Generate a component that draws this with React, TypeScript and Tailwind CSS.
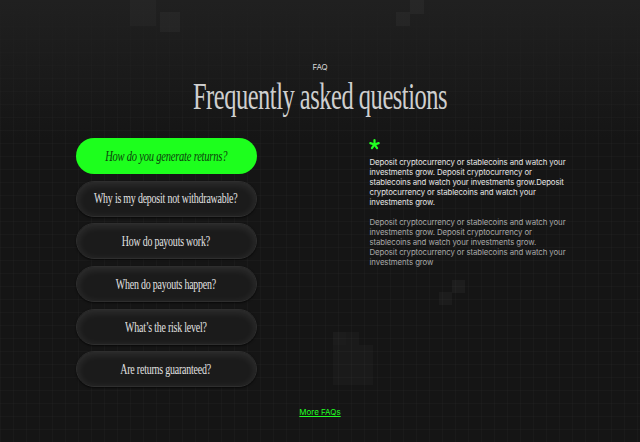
import React from "react";

const questions = [
  "How do you generate returns?",
  "Why is my deposit not withdrawable?",
  "How do payouts work?",
  "When do payouts happen?",
  "What’s the risk level?",
  "Are returns guaranteed?",
];

const squares: { x: number; y: number; s: number; o: string }[] = [
  { x: 130, y: 0, s: 26, o: "bg-white/[0.025]" },
  { x: 160, y: 12, s: 20, o: "bg-white/[0.03]" },
  { x: 410, y: 0, s: 14, o: "bg-white/[0.03]" },
  { x: 396, y: 12, s: 14, o: "bg-white/[0.03]" },
  { x: 452, y: 280, s: 13, o: "bg-white/[0.035]" },
  { x: 439, y: 292, s: 13, o: "bg-white/[0.03]" },
  { x: 333, y: 332, s: 13, o: "bg-white/[0.03]" },
  { x: 346, y: 332, s: 13, o: "bg-white/[0.025]" },
  { x: 333, y: 345, s: 40, o: "bg-white/[0.025]" },
];

export default function App() {
  return (
    <div
      className="relative w-[640px] h-[442px] overflow-hidden bg-[#151515] bg-[linear-gradient(to_right,rgba(255,255,255,0.018)_1px,transparent_1px),linear-gradient(to_bottom,rgba(255,255,255,0.018)_1px,transparent_1px)] bg-[size:13px_13px]"
      style={{ fontFamily: "Inter, 'Liberation Sans', sans-serif" }}
    >
      <div className="absolute inset-x-0 top-0 h-[140px] bg-gradient-to-b from-[#202020] to-transparent" />
      {squares.map((q, i) => (
        <div
          key={i}
          className={`absolute ${q.o}`}
          style={{ left: q.x, top: q.y, width: q.s, height: q.s }}
        />
      ))}

      <div className="relative flex flex-col items-center pt-[62px]">
        <div className="text-[8px] leading-[10px] text-[#d8d8d8] tracking-tight">FAQ</div>
        <h1
          className="mt-[4px] h-[40px] flex items-center justify-center text-[38px] leading-[40px] text-[#cfcfcf] tracking-[-0.02em]"
          style={{ fontFamily: "'Liberation Serif', serif" }}
        >
          <span className="inline-block scale-x-[0.645] whitespace-nowrap">Frequently asked questions</span>
        </h1>

        <div className="mt-[22px] w-[489px] flex gap-[113px]">
          <div className="w-[181px] flex flex-col gap-[6.7px] shrink-0">
            {questions.map((q, i) =>
              i === 0 ? (
                <div
                  key={q}
                  className="h-[36px] rounded-full bg-[#1dff1d] flex items-center justify-center text-[#0c3d0c] text-[15px] italic"
                  style={{ fontFamily: "'Liberation Serif', serif" }}
                >
                  <span className="inline-block scale-x-[0.7] whitespace-nowrap tracking-[-0.02em]">{q}</span>
                </div>
              ) : (
                <div
                  key={q}
                  className="h-[36px] rounded-full bg-[#1b1b1b] border border-[#2e2e2e] shadow-[inset_0_2px_8px_rgba(255,255,255,0.10),0_1px_2px_rgba(0,0,0,0.6)] flex items-center justify-center text-[#e2e2e2] text-[15px]"
                  style={{ fontFamily: "'Liberation Serif', serif" }}
                >
                  <span className="inline-block scale-x-[0.66] whitespace-nowrap tracking-[-0.02em]">{q}</span>
                </div>
              )
            )}
          </div>

          <div className="flex-1 pt-[1px]">
            <svg width="11" height="11" viewBox="0 0 20 20" className="ml-[-1px]">
              <g stroke="#22ff22" strokeWidth="4" strokeLinecap="round">
                <line x1="10" y1="10" x2="10" y2="2" />
                <line x1="10" y1="10" x2="17.6" y2="7.5" />
                <line x1="10" y1="10" x2="2.4" y2="7.5" />
                <line x1="10" y1="10" x2="14.7" y2="16.5" />
                <line x1="10" y1="10" x2="5.3" y2="16.5" />
              </g>
            </svg>
            <p className="mt-[7px] text-[7.8px] leading-[10px] tracking-[-0.01em] text-[#e6e6e6] w-[196px]">
              Deposit cryptocurrency or stablecoins and watch your investments grow. Deposit cryptocurrency or stablecoins and watch your investments grow.Deposit cryptocurrency or stablecoins and watch your investments grow.
            </p>
            <p className="mt-[10px] text-[7.8px] leading-[10px] tracking-[-0.01em] text-[#a8a8a8] w-[196px]">
              Deposit cryptocurrency or stablecoins and watch your investments grow. Deposit cryptocurrency or stablecoins and watch your investments grow. Deposit cryptocurrency or stablecoins and watch your investments grow
            </p>
          </div>
        </div>

        <a className="mt-[20px] text-[8px] leading-[10px] text-[#22ff22] underline">More FAQs</a>
      </div>
    </div>
  );
}
